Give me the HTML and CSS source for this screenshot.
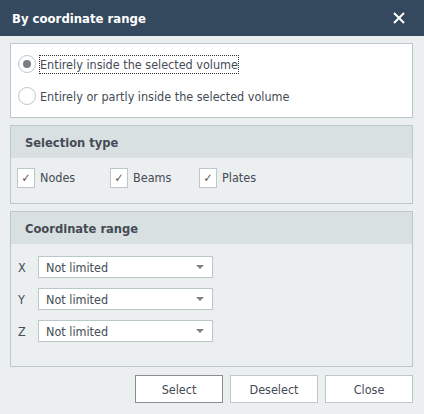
FILE: index.html
```html
<!DOCTYPE html>
<html>
<head>
<meta charset="utf-8">
<link rel="stylesheet" href="styles.css">
</head>
<body>
<div class="dialog">
  <div class="titlebar">
    <span class="title">By coordinate range</span>
    <svg class="close" width="12" height="12" viewBox="0 0 12 12"><path d="M1 1L11 11M11 1L1 11" stroke="#fff" stroke-width="2"/></svg>
  </div>
  <div class="content">
    <div class="panel radios">
      <div class="radio-row">
        <span class="radio checked"></span>
        <span class="label focus">Entirely inside the selected volume</span>
      </div>
      <div class="radio-row">
        <span class="radio"></span>
        <span class="label">Entirely or partly inside the selected volume</span>
      </div>
    </div>
    <div class="panel group">
      <div class="group-head">Selection type</div>
      <div class="checks">
        <div class="check-item"><span class="box">✓</span><span>Nodes</span></div>
        <div class="check-item"><span class="box">✓</span><span>Beams</span></div>
        <div class="check-item"><span class="box">✓</span><span>Plates</span></div>
      </div>
    </div>
    <div class="panel group coords">
      <div class="group-head">Coordinate range</div>
      <div class="rows">
        <div class="row"><span class="axis">X</span><div class="select"><span>Not limited</span><span class="arrow"></span></div></div>
        <div class="row"><span class="axis">Y</span><div class="select"><span>Not limited</span><span class="arrow"></span></div></div>
        <div class="row"><span class="axis">Z</span><div class="select"><span>Not limited</span><span class="arrow"></span></div></div>
      </div>
    </div>
    <div class="buttons">
      <button class="btn primary">Select</button>
      <button class="btn">Deselect</button>
      <button class="btn">Close</button>
    </div>
  </div>
</div>
</body>
</html>
```
FILE: styles.css
```css
* { box-sizing: border-box; }
html, body { margin: 0; padding: 0; }
body {
  width: 424px; height: 414px; overflow: hidden;
  background: #ebeff0;
  font-family: "DejaVu Sans Condensed", "DejaVu Sans", sans-serif;
  font-size: 12.5px;
  color: #444b55;
}
.dialog { width: 424px; height: 414px; display: flex; flex-direction: column; }
.titlebar {
  height: 36px; background: #34495e; color: #fff;
  display: flex; align-items: center; justify-content: space-between;
  padding: 0 19px 0 12px;
}
.title { font-weight: bold; font-size: 13px; }
.close { display: block; }
.content { padding: 7px 11px 0 10px; display: flex; flex-direction: column; }
.panel { border: 1px solid #bcc7c9; }
.radios { background: #fff; height: 75px; padding: 4px 0 0 7px; }
.radio-row { display: flex; align-items: center; height: 32px; }
.radio {
  width: 18px; height: 18px; border-radius: 50%;
  border: 1px solid #bcc7c9; background: #fff; margin-right: 4px;
  display: flex; align-items: center; justify-content: center;
}
.radio.checked::after { content: ""; width: 8px; height: 8px; border-radius: 50%; background: #7a7f84; }
.label.focus { outline: 1px dotted #333; outline-offset: 0; padding: 1px 0; }
.group { margin-top: 7px; }
.group-head {
  height: 32px; background: #d9e0e1; font-weight: bold; color: #444b55;
  display: flex; align-items: center; padding-left: 14px; font-size: 12.8px;
}
.checks { display: flex; height: 45px; padding: 10px 0 0 6px; }
.check-item { display: flex; align-items: flex-start; }
.check-item:nth-child(1) { width: 93px; }
.check-item:nth-child(2) { width: 89px; }
.check-item span:last-child { line-height: 20px; }
.box {
  width: 18px; height: 20px; background: #fff; border: 1px solid #bcc7c9;
  display: flex; align-items: center; justify-content: center;
  margin-right: 5px; font-size: 12px; color: #555;
}
.coords { height: 156px; }
.rows { padding: 12px 0 0 7px; display: flex; flex-direction: column; gap: 10px; }
.row { display: flex; align-items: center; }
.axis { width: 20px; }
.select {
  width: 175px; height: 22px; background: #fff; border: 1px solid #bcc7c9;
  display: flex; align-items: center; justify-content: space-between;
  padding: 0 8px 0 7px;
}
.arrow { width: 0; height: 0; border-left: 4px solid transparent; border-right: 4px solid transparent; border-top: 4px solid #7a7f84; }
.buttons { display: flex; justify-content: flex-end; gap: 7px; margin-top: 8px; }
.btn {
  width: 88px; height: 28px; background: #fff; border: 1px solid #bcc7c9;
  font: inherit; color: #444b55; padding: 0;
}
.btn.primary { border-color: #8a8e92; }
```
